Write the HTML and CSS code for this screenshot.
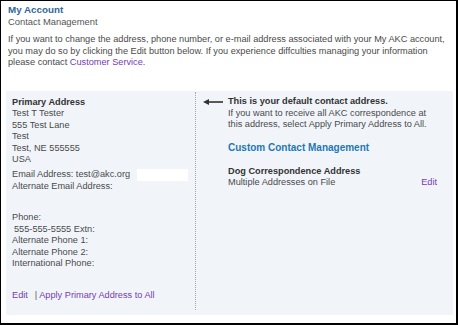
FILE: index.html
```html
<!DOCTYPE html>
<html lang="en">
<head>
    <meta charset="UTF-8">
    <meta name="viewport" content="width=device-width, initial-scale=1.0">
    <title>My Account - Contact Management</title>
    <link rel="stylesheet" href="styles.css">
</head>
<body>
    <div class="frame">
        <h1 class="page-title">My Account</h1>
        <h2 class="page-subtitle">Contact Management</h2>
        <p class="intro">If you want to change the address, phone number, or e-mail address associated with your My AKC account, you may do so by clicking the Edit button below. If you experience diffculties managing your information please contact <a href="#" class="link">Customer Service.</a></p>

        <div class="panel">
            <!-- primary address column -->
            <div class="primary">
                <div class="label">Primary Address</div>
                <div>Test T Tester</div>
                <div>555 Test Lane</div>
                <div>Test</div>
                <div>Test, NE 555555</div>
                <div>USA</div>

                <div class="email-block">
                    <div>Email Address: test@akc.org <span class="blank-field"></span></div>
                    <div>Alternate Email Address:</div>
                </div>

                <div class="phone-block">
                    <div>Phone:</div>
                    <div class="phone-number">555-555-5555 Extn:</div>
                    <div>Alternate Phone 1:</div>
                    <div>Alternate Phone 2:</div>
                    <div>International Phone:</div>
                </div>

                <div class="actions">
                    <a href="#" class="link">Edit</a><span class="sep">|</span><a href="#" class="link">Apply Primary Address to All</a>
                </div>
            </div>

            <!-- custom contact column -->
            <div class="custom">
                <svg class="arrow" width="20" height="8" viewBox="0 0 20 8">
                    <path d="M0 4 L6 1 L6 7 Z" fill="#333"/>
                    <rect x="5" y="3.2" width="15" height="1.6" fill="#333"/>
                </svg>
                <div class="custom-body">
                    <div class="label">This is your default contact address.</div>
                    <div>If you want to receive all AKC correspondence at this address, select Apply Primary Address to All.</div>

                    <h3 class="custom-title">Custom Contact Management</h3>

                    <div class="label">Dog Correspondence Address</div>
                    <div class="row">
                        <span>Multiple Addresses on File</span>
                        <a href="#" class="link">Edit</a>
                    </div>
                </div>
            </div>
        </div>
    </div>
</body>
</html>
```

FILE: styles.css
```css
/* Contact management page */
body {
    margin: 0;
    padding: 0;
    background-color: #fff;
    font-family: "Liberation Sans", Arial, sans-serif;
    font-size: 9.2px;
    line-height: 11.5px;
    color: #4a4a4a;
}

.frame {
    width: 458px;
    height: 325px;
    box-sizing: border-box;
    border-style: solid;
    border-color: #000;
    border-width: 1px 2px 2px 1px;
    padding: 2.5px 3px 0 5px;
    overflow: hidden;
}

.page-title {
    margin: 0 0 0 2px;
    font-size: 9.8px;
    line-height: 11.5px;
    font-weight: bold;
    color: #2f6699;
}

.page-subtitle {
    margin: 1px 0 0 2px;
    font-size: 9.4px;
    line-height: 11.5px;
    font-weight: normal;
    color: #555;
}

.intro {
    margin: 6.5px 0 0 2px;
}

.link {
    color: #7440b0;
    text-decoration: none;
}

.label {
    font-weight: bold;
    color: #333;
}

.panel {
    display: flex;
    margin-top: 22px;
    padding: 1px 0 5px 0;
    background-color: #f1f5fa;
}

.primary {
    width: 183px;
    padding: 5px 0 9px 6px;
    border-right: 1px dotted #a8a8a8;
}

.email-block {
    margin-top: 3px;
}

.blank-field {
    display: inline-block;
    width: 51px;
    height: 12px;
    margin-left: 4px;
    vertical-align: middle;
    background-color: #fff;
}

.phone-block {
    margin-top: 20px;
}

.phone-number {
    padding-left: 2px;
}

.actions {
    margin-top: 20px;
}

.sep {
    margin: 0 2px 0 7px;
    color: #555;
}

.custom {
    flex: 1;
    display: flex;
    align-items: flex-start;
    padding: 4.5px 16px 0 7px;
}

.arrow {
    flex: none;
    margin: 2px 5px 0 0;
}

.custom-body {
    flex: 1;
}

.custom-title {
    margin: 11px 0 11.5px 0;
    font-size: 10px;
    line-height: 12.5px;
    font-weight: bold;
    color: #1f78b4;
}

.row {
    display: flex;
    justify-content: space-between;
}
```
